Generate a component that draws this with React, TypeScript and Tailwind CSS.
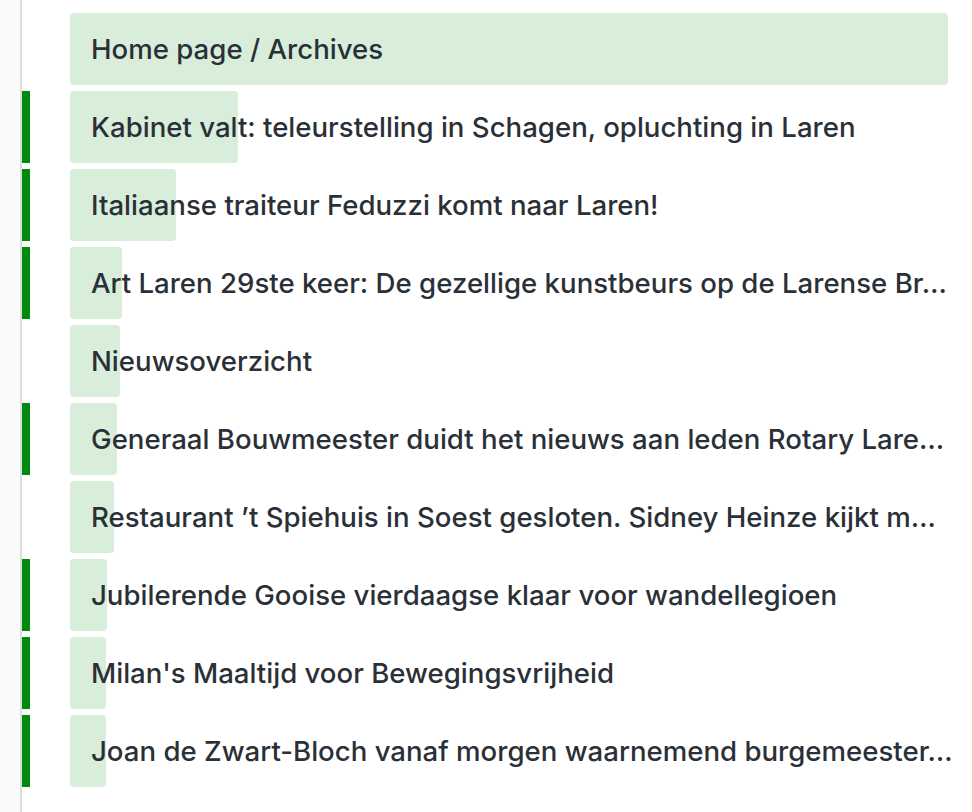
import React from "react"

type Item = {
  title: string
  progress: number
  marked: boolean
}

const items: Item[] = [
  { title: "Home page / Archives", progress: 878, marked: false },
  { title: "Kabinet valt: teleurstelling in Schagen, opluchting in Laren", progress: 168, marked: true },
  { title: "Italiaanse traiteur Feduzzi komt naar Laren!", progress: 106, marked: true },
  { title: "Art Laren 29ste keer: De gezellige kunstbeurs op de Larense Br…", progress: 52, marked: true },
  { title: "Nieuwsoverzicht", progress: 50, marked: false },
  { title: "Generaal Bouwmeester duidt het nieuws aan leden Rotary Lare…", progress: 47, marked: true },
  { title: "Restaurant ’t Spiehuis in Soest gesloten. Sidney Heinze kijkt m…", progress: 44, marked: false },
  { title: "Jubilerende Gooise vierdaagse klaar voor wandellegioen", progress: 37, marked: true },
  { title: "Milan's Maaltijd voor Bewegingsvrijheid", progress: 36, marked: true },
  { title: "Joan de Zwart-Bloch vanaf morgen waarnemend burgemeester…", progress: 36, marked: true },
]

const Row = ({ item }: { item: Item }) => (
  <div className="flex h-[72px]">
    <div className={item.marked ? "w-[8px] bg-[#008a0e]" : "w-[8px]"} />
    <div className="relative ml-[40px] mr-[24px] flex min-w-0 flex-1 items-center">
      <div
        className="absolute inset-y-0 left-0 rounded-[4px] bg-[#d9eddb]"
        style={{ width: item.progress }}
      />
      <span className="relative mt-[1px] whitespace-nowrap pl-[21px] text-[27.6px] font-medium text-[#2a3037]">
        {item.title}
      </span>
    </div>
  </div>
)

export default function App() {
  return (
    <div
      className="flex min-h-screen bg-white"
      style={{ fontFamily: "Inter, 'Noto Sans', sans-serif" }}
    >
      <div className="w-[22px] shrink-0 border-r-2 border-[#dddddd] bg-[#fafafa]" />
      <div className="flex min-w-0 flex-1 flex-col gap-[6px] pt-[13px]">
        {items.map((item) => (
          <Row key={item.title} item={item} />
        ))}
      </div>
    </div>
  )
}
